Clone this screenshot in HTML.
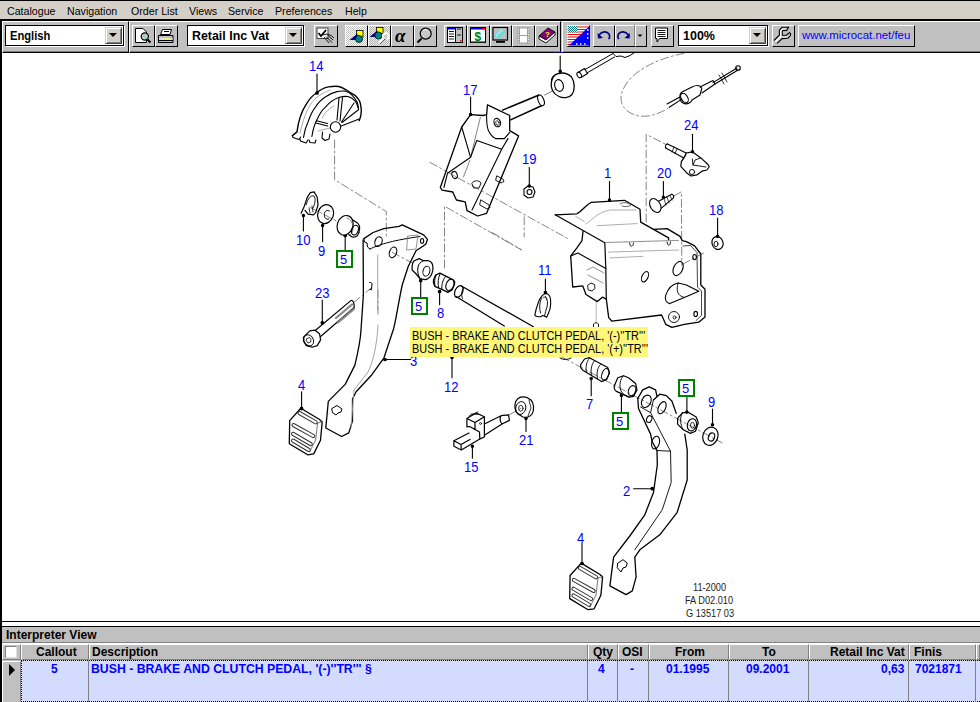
<!DOCTYPE html>
<html><head><meta charset="utf-8">
<style>
*{margin:0;padding:0;box-sizing:border-box}
html,body{width:980px;height:702px;overflow:hidden;background:#fff;font-family:"Liberation Sans",sans-serif}
div,span,svg,b{position:absolute}
#menu{left:0;top:0;width:980px;height:19px;background:#d4d0c8;border-top:1px solid #000}
#menu span{top:3.5px;font-size:11px;color:#000;white-space:nowrap;transform:scaleX(0.967);transform-origin:0 0}
#tb{left:0;top:19px;width:980px;height:34px;background:#c0c0c0;border-top:2px solid #000}
.sec{top:21px;height:32px;border-top:1px solid #fff;border-left:1px solid #fff;border-right:1px solid #000;border-bottom:1px solid #000;box-shadow:inset 0 -1px 0 #808080}
.btn{top:25px;height:22px;background:#c0c0c0;border-top:1px solid #fff;border-left:1px solid #fff;border-right:1px solid #000;border-bottom:1px solid #000;}
.combo{top:25px;height:21px;background:#fff;border:1px solid #000;box-shadow:1px 1px 0 #fff}
.combo b{left:4px;top:3px;font-size:12px;line-height:14px;font-weight:bold;color:#000;white-space:nowrap;transform-origin:0 0}
.dd{top:1px;right:1px;width:17px;height:17px;background:#d4d0c8;border-top:1px solid #d4d0c8;border-left:1px solid #d4d0c8;border-right:1px solid #404040;border-bottom:1px solid #404040;box-shadow:inset 1px 1px 0 #fff,inset -1px -1px 0 #808080}
.dd:after{content:"";position:absolute;left:3px;top:5px;border-left:4px solid transparent;border-right:4px solid transparent;border-top:4px solid #000}
#left{left:0;top:19px;width:2px;height:683px;background:#000}
.lb{font-size:14px;color:#0000ff;white-space:nowrap;line-height:13px;transform:scaleX(0.93);transform-origin:0 0}
.gb{border:2px solid #008000;width:17px;height:18px}
.gb span{left:2px;top:1px;font-size:13px;color:#0000ff;line-height:13px}
.cap{font-size:10px;color:#222;white-space:nowrap;line-height:10px;transform:scaleX(0.92);transform-origin:0 0}
#tip{left:410px;top:327px;width:238px;height:30px;background:#fff77a}
#tip span{left:2px;font-size:12px;transform:scaleX(0.912);transform-origin:0 0;color:#000;white-space:nowrap;line-height:13px}
#bp{left:2px;top:621px;width:978px;height:81px;background:#c0c0c0}
.hd{top:644px;height:16px;background:#c0c0c0;border-top:1px solid #fff;border-left:1px solid #fff;border-right:1px solid #808080;border-bottom:1px solid #808080}
.hd span{top:0px;font-size:12px;font-weight:bold;color:#000;white-space:nowrap;line-height:14px}
.vl{top:661px;width:1px;height:41px;background:#808080}
.dt{top:662px;font-size:12px;font-weight:bold;color:#0000ff;white-space:nowrap;line-height:14px}
</style></head><body>
<div id="menu">
<span style="left:6.5px">Catalogue</span>
<span style="left:66.5px">Navigation</span>
<span style="left:130.5px">Order List</span>
<span style="left:188.5px">Views</span>
<span style="left:228px">Service</span>
<span style="left:275px">Preferences</span>
<span style="left:345px">Help</span>
</div>
<div id="tb"></div>
<div class="sec" style="left:2px;width:127px"></div>
<div class="sec" style="left:129px;width:432px"></div>
<div class="sec" style="left:562px;width:418px;border-right:none"></div>
<div class="combo" style="left:5px;width:119px"><b style="left:4px;transform:scaleX(0.93)">English</b><div class="dd"></div></div>
<div class="btn" style="left:132px;width:23px"></div>
<div class="btn" style="left:155px;width:23px"></div>
<div class="combo" style="left:187px;width:117px"><b style="left:4px;transform:scaleX(1.033)">Retail Inc Vat</b><div class="dd"></div></div>
<div class="btn" style="left:314px;width:24px"></div>
<div class="btn" style="left:345px;width:23px;background:#e0e0e0"></div>
<div class="btn" style="left:368px;width:23px;background:#d0d0d0"></div>
<div class="btn" style="left:391px;width:23px"></div>
<div class="btn" style="left:414px;width:23px"></div>
<div class="btn" style="left:444px;width:23px"></div>
<div class="btn" style="left:467px;width:23px"></div>
<div class="btn" style="left:490px;width:22px"></div>
<div class="btn" style="left:512px;width:23px"></div>
<div class="btn" style="left:535px;width:23px"></div>
<div class="btn" style="left:567px;width:23px"></div>
<div class="btn" style="left:593px;width:22px"></div>
<div class="btn" style="left:615px;width:20px"></div>
<div class="btn" style="left:635px;width:12px"></div>
<div class="btn" style="left:651px;width:23px"></div>
<div class="combo" style="left:678px;width:90px"><b style="left:4px;transform:scaleX(1.04)">100%</b><div class="dd"></div></div>
<div class="btn" style="left:772px;width:23px"></div>
<div class="btn" style="left:798px;width:117px"><span style="left:3px;top:3px;font-size:11.4px;color:#0000ff;white-space:nowrap">www.microcat.net/feu</span></div>
<svg style="left:0;top:0" width="980" height="53" viewBox="0 0 980 53">
<defs>
<pattern id="dith1" width="2" height="2" patternUnits="userSpaceOnUse"><rect width="2" height="2" fill="#fff"/><rect width="1" height="1" fill="#c0c0c0"/><rect x="1" y="1" width="1" height="1" fill="#c0c0c0"/></pattern>
<pattern id="dith2" width="2" height="2" patternUnits="userSpaceOnUse"><rect width="2" height="2" fill="#e8e8e8"/><rect width="1" height="1" fill="#b8b8b8"/><rect x="1" y="1" width="1" height="1" fill="#b8b8b8"/></pattern>
<pattern id="tealck" width="2" height="2" patternUnits="userSpaceOnUse"><rect width="2" height="2" fill="#fff"/><rect width="1" height="1" fill="#008080"/><rect x="1" y="1" width="1" height="1" fill="#008080"/></pattern>
</defs>
<!-- preview page + magnifier -->
<path d="M135.5,28.5 H143 L146.5,32 V42.5 H135.5 Z" fill="#fff" stroke="#000" stroke-width="1"/>
<circle cx="144.8" cy="36.5" r="3.6" fill="#c8c8c8" stroke="#000" stroke-width="1.2"/>
<rect x="143" y="35" width="1.5" height="1.5" fill="#0ff"/><rect x="145" y="37.5" width="1.5" height="1.5" fill="#0ff"/>
<line x1="147.5" y1="39.5" x2="150.5" y2="42.5" stroke="#000" stroke-width="2"/>
<!-- printer -->
<path d="M162.5,29.5 H171.5 L170,34.5 H160.5 Z" fill="#fff" stroke="#000" stroke-width="1"/>
<line x1="164" y1="31.5" x2="169" y2="31.5" stroke="#000"/>
<path d="M158.5,35.5 H173 V42.5 H158.5 Z" fill="#c0c0c0" stroke="#000" stroke-width="1"/>
<rect x="159" y="38" width="13.5" height="2" fill="#e0e0e0"/>
<rect x="166" y="38.5" width="3" height="1" fill="#ff0"/>
<line x1="158.5" y1="40.5" x2="173" y2="40.5" stroke="#000"/>
<!-- check + hand -->
<rect x="317" y="28" width="11" height="10.5" fill="#fff" stroke="#404040" stroke-width="1"/>
<path d="M318.5,33 L321,36 L326,30" fill="none" stroke="#000" stroke-width="1.8"/>
<path d="M323,35 L327,34 L331,35.5 L334,38 M324,37 L329,43 M326,36.5 L332,42.5 M327.5,35 L333,40" fill="none" stroke="#000" stroke-width="0.9"/>
<!-- shapes 1 -->
<rect x="346" y="26" width="21" height="20" fill="url(#dith1)"/>
<rect x="356.5" y="30.5" width="6.5" height="6.5" fill="#ff0" stroke="#000" stroke-width="0.8"/>
<path d="M349.5,40 L357.5,33.5 V40 Z" fill="#000080"/>
<circle cx="359" cy="39" r="3.6" fill="#008080" stroke="#000" stroke-width="0.7"/>
<!-- shapes 2 -->
<rect x="369" y="26" width="21" height="20" fill="url(#dith2)"/>
<rect x="376.5" y="27.5" width="6.5" height="6" fill="#ff0" stroke="#000" stroke-width="0.8"/>
<path d="M369.5,37 L377.5,30.5 V37 Z" fill="#000080"/>
<circle cx="378.5" cy="35.5" r="3.6" fill="#008080" stroke="#000" stroke-width="0.7"/>
<path d="M379,43 L384,38 M383,37 A3,3 0 1 1 387,39" fill="none" stroke="#fff" stroke-width="1.8"/>
<path d="M380,44 L385,39" fill="none" stroke="#404040" stroke-width="0.8"/>
<!-- alpha -->
<text x="395" y="41.5" font-family="Liberation Serif" font-weight="bold" font-style="italic" font-size="19" fill="#000">α</text>
<!-- magnifier -->
<circle cx="425.7" cy="33.6" r="5.5" fill="#c8c8c8" stroke="#000" stroke-width="1.2"/>
<path d="M423,31 A3,3 0 0 1 427,30" stroke="#fff" fill="none" stroke-width="1"/>
<line x1="417.5" y1="42.5" x2="421.5" y2="38.5" stroke="#000" stroke-width="2"/>
<!-- parts list icon -->
<rect x="447.5" y="27.5" width="15" height="15" fill="#c0c0c0" stroke="#000" stroke-width="1"/>
<rect x="448" y="28" width="7" height="14" fill="#fff"/>
<rect x="448" y="28" width="7" height="1.5" fill="#00f"/>
<path d="M449,31.5 H454 M449,34 H454 M449,36.5 H454 M449,39 H454" stroke="#000" stroke-width="0.9"/>
<line x1="455.5" y1="28" x2="455.5" y2="42" stroke="#000"/>
<path d="M457,29 H461 M457,35 H461" stroke="#000" stroke-width="0.9"/>
<rect x="460" y="40" width="1.5" height="1.5" fill="#f00"/>
<!-- $ window -->
<rect x="470.5" y="27.5" width="15" height="15" fill="#fff" stroke="#000" stroke-width="1"/>
<rect x="471" y="28" width="14" height="1.5" fill="#00f"/><rect x="482" y="28" width="3" height="1.5" fill="#f00"/>
<rect x="471" y="41" width="14" height="1.2" fill="#808080"/>
<text x="474.5" y="40.5" font-family="Liberation Sans" font-weight="bold" font-size="12" fill="#008000">$</text>
<!-- monitor -->
<rect x="493" y="27.5" width="14.5" height="12.5" fill="#c0c0c0" stroke="#000" stroke-width="1.2"/>
<path d="M495,37 L501,30 M498,38 L505,31" stroke="#0ff" stroke-width="1.3"/>
<path d="M496,36 L502,29.5" stroke="#fff" stroke-width="1"/>
<rect x="496" y="41" width="9" height="1.8" fill="#000"/>
<!-- film -->
<rect x="517.5" y="27.5" width="12" height="16" fill="#a0a0a0"/>
<rect x="520" y="28.5" width="7" height="6.5" fill="#fff"/><rect x="520" y="36" width="7" height="6.5" fill="#fff"/>
<path d="M518.5,29 V43 M528.5,29 V43" stroke="#fff" stroke-width="1" stroke-dasharray="1 1.5"/>
<!-- book -->
<path d="M539,36 L548,28 L555,32 L546,40 Z" fill="#800080" stroke="#000" stroke-width="0.9"/>
<path d="M539,36 L539,39 L546,43 L555,35 L555,32 L546,40 Z" fill="#fff" stroke="#000" stroke-width="0.9"/>
<text x="545" y="37" font-family="Liberation Sans" font-weight="bold" font-size="8" fill="#ff0">?</text>
<!-- flag -->
<rect x="567.5" y="26" width="21.5" height="19.5" fill="#fff"/>
<path d="M567.5,27 H589 M567.5,29.5 H589 M567.5,32 H589 M567.5,34.5 H589 M567.5,37 H589 M567.5,39.5 H589 M567.5,42 H589 M567.5,44.5 H589" stroke="#f00" stroke-width="1.2"/>
<rect x="568" y="26" width="9" height="6.5" fill="url(#tealck)"/>
<path d="M589,26.5 L589,45.5 L569,45.5 Z" fill="#0000ff"/>
<path d="M587,30 h1.5 M587,34 h1.5 M587,38 h1.5 M584,44 h1.5 M580,44 h1.5 M576,44 h1.5" stroke="#fff" stroke-width="1.5"/>
<line x1="567.5" y1="46.5" x2="590" y2="46.5" stroke="#000"/><line x1="589.5" y1="26" x2="589.5" y2="46.5" stroke="#000"/>
<!-- undo / redo -->
<path d="M599,35 C602,31 607,31 609,34 C610,36 609.5,38 608.5,39" fill="none" stroke="#000080" stroke-width="1.6"/>
<path d="M597.5,33 L598,38.5 L603,38 Z" fill="#000080"/>
<path d="M628.5,35 C625.5,31 620.5,31 618.5,34 C617.5,36 618,38 619,39" fill="none" stroke="#000080" stroke-width="1.6"/>
<path d="M630,33 L629.5,38.5 L624.5,38 Z" fill="#000080"/>
<path d="M637.5,34.5 H642.5 L640,37 Z" fill="#000"/>
<line x1="634.5" y1="26" x2="634.5" y2="46" stroke="#808080"/>
<!-- comment -->
<path d="M655.5,28 H667.5 V38.5 H659.5 L657,42 V38.5 H655.5 Z" fill="#fff" stroke="#000" stroke-width="1"/>
<path d="M657.5,30.5 H665.5 M657.5,32.5 H665.5 M657.5,34.5 H665.5 M657.5,36.5 H665.5" stroke="#000" stroke-width="0.9"/>
<!-- wrench -->
<path d="M774,40.5 L779.5,35 L779.3,30.4 L781.9,27.3 L788.5,27.3 L786.7,30.4 L782.2,30.8 L782.2,35.2 L786.3,35.2 L790,32.3 L790.6,33 L790.4,35.6 L787.8,38.2 L782.2,38.6 L777,43.4 Z" fill="#d0d0d0" stroke="none"/>
<path d="M774,40.5 L779.5,35 L779.3,30.4 L781.9,27.3 L788.5,27.3 L786.7,30.4 L782.2,30.8 L782.2,35.2 L786.3,35.2 L790,32.3" fill="none" stroke="#000" stroke-width="1.1"/>
<path d="M790.6,33 L790.4,35.6 L787.8,38.2 L782.2,38.6 L777,43.4" fill="none" stroke="#000" stroke-width="1.1"/>
<path d="M775.5,41.5 L780.8,36.3 L780.8,31 L782.5,28.8" fill="none" stroke="#fff" stroke-width="1.2"/>
</svg>

<div id="left"></div>
<!-- drawing -->
<svg style="left:0;top:0" width="980" height="702" viewBox="0 0 980 702">
<g fill="none" stroke="#000" stroke-width="1.1" stroke-linejoin="round" stroke-linecap="round">
<g stroke="#777" stroke-width="0.9" stroke-dasharray="8 3 2 3">
<polyline points="334.6,140 334.6,179.7 386.3,211.5 386.3,239"/>
<polyline points="444.5,268 444.5,206.2 521.6,250"/>
<polyline points="524.2,216.8 524.2,236.7"/>
<line x1="430" y1="162.4" x2="569.3" y2="239.4"/>
<path d="M683.8,53.4 C660,58 630,70 622,92 C617,108 632,118 648,116 C655,115 662,112 668,108.4"/>
<polyline points="646.2,222 646.2,134.3 667.3,145.2"/>
<polyline points="674,196 681.4,191.8 681.8,265.2"/>
<line x1="703.6" y1="253.1" x2="680.6" y2="265.2"/>
<line x1="492" y1="232.4" x2="521" y2="249.4"/>
<line x1="310" y1="207.4" x2="362.3" y2="234.1"/>
<line x1="353.7" y1="302.5" x2="371.9" y2="287.5"/>
<line x1="544.5" y1="95" x2="558" y2="88.2"/>
<line x1="561.7" y1="357" x2="722.3" y2="442.9"/>
<line x1="509.4" y1="414.8" x2="521" y2="408.3"/>
<line x1="378" y1="290" x2="378" y2="314"/>
<line x1="392.2" y1="252.3" x2="423" y2="268.7"/>
</g>

<!-- part 1 main bracket -->
<line x1="609.5" y1="181.5" x2="609.5" y2="200"/>
<circle cx="609.5" cy="200" r="1.2" fill="#000"/>
<path stroke-width="1.3" d="M555.2,214.8 L576.9,213.8 C582,211 586,205 591.3,202.4 L624.4,200.3 L640,209.3 L640.7,222.1 L668.6,237.9 L668.6,240 M652.9,229.3 L667.1,228.6 L680,236.4 L682.2,240.6 L686.4,241.7 L694.6,245.8 L700.8,254 L700.8,285 L705,289.2 L705,317.1 L698.8,322.2 L684.3,324.3 L671.9,327.4 L665.7,324.3 L661.6,315 L612,321.2 L608.7,317.6 L606.3,299.2 L602.4,297.2 L597.3,301.6 L586,294.5 L582.8,285.9 L572.7,287 L570.7,256.1 L576.9,247.9 L582,240.6 L583,231.3"/>
<path stroke-width="1.2" d="M555.2,214.8 L604.8,242.7 L605.8,268.5 L606.3,299.2"/>
<path d="M570.7,256.1 L577.9,253 L605.8,268.5"/>
<path d="M605.7,242.5 L678.6,240.4" stroke="#888" stroke-width="1" stroke-dasharray="1.5 0.8"/>
<path d="M608.6,252.1 L678.6,250" stroke="#999" stroke-width="0.8"/>
<path d="M610,257.9 L642.9,256.4" stroke="#999" stroke-width="0.8"/>
<path d="M586,224 C592,220 598,212 610,210 L636,210" stroke="#999" stroke-width="0.8"/><path d="M575.7,216.4 L584.3,221.4" stroke="#999" stroke-width="0.8"/>
<path d="M597,225.7 L637,223.6" stroke="#999" stroke-width="0.8"/>
<path d="M620,204 C622,202 628,202 631,205 C629,207 624,207 622,206" stroke-width="0.8" stroke="#444"/>
<path d="M629.5,243 C630,247 633,248 633.5,243 M667,242 C667.5,246 670,247 670.5,242" stroke-width="0.9"/>
<path d="M683,246 L690.5,245.5 L697,252.5 L697.5,287 L701.5,291 L701.5,315.5 L696,320.5" stroke-width="0.9" stroke="#333"/>
<ellipse cx="645" cy="276.8" rx="3" ry="5.5" transform="rotate(25 645 276.8)"/>
<ellipse cx="678.1" cy="268.5" rx="4.5" ry="7.5" transform="rotate(25 678.1 268.5)"/>
<ellipse cx="694.6" cy="257.1" rx="1.8" ry="2.6"/>
<ellipse cx="695.7" cy="314" rx="1.8" ry="2.6"/>
<path d="M665.7,295.4 C668,288 673,284 678.1,283 L686.4,285 L698.8,291.2 L684.3,297.4 L669.8,303.6 C666,303 664.5,299 665.7,295.4 Z"/>
<path d="M678.1,283 C676,290 677,296 684.3,297.4" stroke-width="0.9"/>
<circle cx="674" cy="317" r="5.5" stroke-width="0.9"/>
<circle cx="674.5" cy="317.5" r="1.5" stroke-width="0.8"/>
<path d="M588,285 L591,283 L594.5,284.5 L595,288.5 L592,291 L588.5,290 Z" stroke-width="0.9"/>
<path d="M587,270 L593,267 L604,273 M588,275 L603,283" stroke="#777" stroke-width="0.8"/>
<!-- part 24 switch -->
<line x1="692.5" y1="134.2" x2="692.5" y2="151.8"/>
<circle cx="692.5" cy="151.8" r="1.2" fill="#000"/>
<path d="M667.4,143.9 L686.2,153 M666.2,148.2 L683.8,157.9"/>
<path d="M667.4,143.9 C665,144.5 665,147.5 666.2,148.2"/>
<path d="M674,147 L672,152 M677,149 L675,153.5" stroke-width="0.8"/>
<path stroke-width="1.2" d="M686.2,153 L692.3,151.8 L700.8,157.9 L708,164.5 L709.2,167 L706.8,170 L702,171.2 L697.1,174.8 L691,176 L687.4,173.6 L680.8,166.4 L681.4,161.5 L683.8,157.9 Z"/>
<path d="M686,155 L681.4,161.5 M692.3,159 L693,165 L706,167 M700.8,157.9 L695,160 L693,165" stroke-width="0.9"/>
<circle cx="692" cy="172" r="2.6" stroke-width="0.9"/>
<!-- part 20 bolt -->
<line x1="663.4" y1="181.5" x2="663.4" y2="197.3"/>
<circle cx="663.4" cy="197.3" r="1.2" fill="#000"/>
<ellipse cx="655.3" cy="205.5" rx="5" ry="7.5" transform="rotate(-30 655.3 205.5)"/>
<path d="M659,200.9 L671.7,194.2 M661.4,208.2 L673.5,197.9 M671.7,194.2 C673.5,194.5 674,196.5 673.5,197.9"/>
<path d="M664,198.5 L666,205 M667,197 L669,203 M670,195.5 L672,200" stroke-width="0.7"/>
<!-- part 18 nut -->
<line x1="717.6" y1="218" x2="717.6" y2="236.2"/>
<circle cx="717.6" cy="236.2" r="1.2" fill="#000"/>
<ellipse cx="717.5" cy="243" rx="5.5" ry="6.5" transform="rotate(-20 717.5 243)" stroke-width="1.2"/>
<ellipse cx="716" cy="244" rx="2" ry="2.8" stroke-width="0.9"/>
<!-- pin below bracket 1 -->
<line x1="596.2" y1="303" x2="596.2" y2="323" stroke="#999" stroke-width="0.8" stroke-dasharray="1 1"/>
<path d="M593.5,327 L593.5,324 C594,322.5 598,322.5 598.5,324 L598.5,327" stroke-width="0.9"/>

<!-- part 14 wheel -->
<line x1="317" y1="74" x2="317" y2="93"/>
<circle cx="317" cy="93" r="1.3" fill="#000"/>
<path stroke-width="1.4" d="M292.4,135.6 L297,131.9 C298,124 301,112 306.3,104.1 C310,98 313,95 316.5,93 C321,89 325,87.5 328.5,86.9 C332,86.3 336,86 338.7,86.5 C341,87 343,88 345.2,89.3 C349,92 352,93.5 355.4,95.7 C358,98 360,101 360.5,104.1 C361.5,108 361.5,112 360.9,115.2 C360.5,117.5 360,119 359.1,120.7"/>
<path d="M303.5,137.4 C304.5,131 306,126 308.1,121.7 C310.5,115 313,110 315.6,106.9 C318.5,102 322,99 325.7,96.7 C329.5,94 333,92.5 336.9,91.6 C339.5,91 342.5,90.8 345.2,91.1 C348,92 350,93 351.7,94.8 C354,97 356,99.5 357.2,102.2 C358,104.5 358.5,107 358.6,109.6"/>
<path d="M311.9,136.5 C313,129 315,123 317.4,118.9 C319.5,114 322,110 325.7,106.9 C329,103 333.5,99.5 338.7,97.6 C342,96.5 346,96.2 348.9,96.7 C351.5,97.5 353.5,99 355.4,101.3 C356.8,103 357.6,105.5 358.1,107.8"/>
<path d="M300,133 C302,125 304,116 309,107 C313,99 320,94 330,90" stroke="#888" stroke-width="0.7"/>
<line x1="340.6" y1="126.3" x2="359.1" y2="118.9"/>
<line x1="342" y1="122.5" x2="358.1" y2="110"/>
<line x1="337" y1="120" x2="339" y2="98"/>
<line x1="340" y1="121" x2="342.5" y2="97.5"/>
<line x1="341.5" y1="122" x2="354" y2="103"/>
<line x1="327.6" y1="123.5" x2="316.5" y2="120.7"/>
<line x1="327.6" y1="126" x2="316" y2="123"/>
<line x1="318" y1="131" x2="330" y2="128" stroke="#888" stroke-width="0.7"/>
<path d="M322,118 C325,112 330,108 334,106" stroke="#888" stroke-width="0.7"/>
<circle cx="335.5" cy="127" r="5.2" fill="#fff"/>
<path d="M292.4,135.6 L293,137.5 L299,139.5 L300.7,137"/>
<path d="M299.8,138.6 L300.5,141 L306,143 L308,140"/>
<path d="M309,140 L310,142.5 L315,143 L316,140"/>
<path d="M322.5,132 L322,138 L325,140.5 L329,139 L330,134"/>

<!-- part 17 bracket -->
<line x1="470.6" y1="97" x2="470.6" y2="114.6"/>
<circle cx="470.6" cy="114.6" r="1.2" fill="#000"/>
<path stroke-width="1.5" d="M502.6,110.1 L539,95 M510.6,119.9 L542,105.5"/>
<ellipse cx="541" cy="100.3" rx="2.8" ry="5.5" transform="rotate(-22 541 100.3)" fill="#fff"/>
<path stroke-width="1.3" d="M470.6,114.6 L461.7,127 L440.3,187.5 L442.1,190.2 L452.8,192 L456.4,200 L465.2,201.8 L467,210.7 L477.7,216 L486.6,213.3 L518.6,135.9 L509.7,130.6 L509.7,115.5 L487.5,104.8 L486.6,114.6 L483,115.5 Z"/>
<path d="M486.6,114.6 C486.5,122 487,127 488.4,130.6 C490,134 492,137 495.5,138.6 L504.4,138.6 L509.7,132.4"/>
<ellipse cx="497.3" cy="122.6" rx="3.2" ry="4.3" transform="rotate(-20 497.3 122.6)"/>
<ellipse cx="497.5" cy="123" rx="1.6" ry="2.4" transform="rotate(-20 497.5 123)" stroke-width="0.7"/>
<path d="M461.7,127 L470.6,157.3 L447.5,173.3 L443.9,187.5"/>
<path d="M480.4,117.2 L470.6,157.3" stroke="#666" stroke-width="0.8"/>
<path d="M470.6,157.3 L476.8,140.4 L501.7,149.3"/>
<path d="M507.9,138.6 L501.7,149.3 L472,210"/>
<path d="M463.5,176.9 L470,160" stroke="#666" stroke-width="0.8"/>
<ellipse cx="454.6" cy="175" rx="2.6" ry="3.6" transform="rotate(-20 454.6 175)"/>
<path d="M472,183 C474,180 479,180 481,183 L479,188 L474,188 Z" stroke-width="0.9"/>
<path d="M497,176 L503,179 L504,181.5 L501,183 L496,180.5 Z" stroke-width="0.9"/>
<path d="M481,200 L489,205 L490,207.5 L487,209 L480,205 Z" stroke-width="0.9"/>
<!-- nut 19 -->
<line x1="529.3" y1="167.5" x2="529.3" y2="186"/>
<circle cx="529.3" cy="186" r="1.2" fill="#000"/>
<path d="M524,189 L528,186 L533,187 L535,192 L533,197 L528,198 L524,195 Z"/>
<circle cx="529.5" cy="192" r="2.5"/>

<!-- clip 10 -->
<line x1="303.4" y1="215.6" x2="303.4" y2="231"/>
<circle cx="303.4" cy="215.6" r="1.2" fill="#000"/>
<path stroke-width="1.2" d="M301.1,213.3 L304.2,206.4 L307.3,197.3 L310.3,192.7 L314.1,191.9 L317.2,197.3 L318,204.9 L315.7,212.6 L313.4,214.9 L308,214.1 L305,210.3"/>
<path d="M306,205 C308,198 311,195 314,196 C316,199 315,204 313,208" stroke-width="0.9"/>
<path d="M309,208 L310,213 M312,206 L313,212" stroke-width="0.8"/>
<!-- washer 9 -->
<line x1="322.6" y1="225.6" x2="322.6" y2="241.7"/>
<circle cx="322.6" cy="225.6" r="1.2" fill="#000"/>
<ellipse cx="325.6" cy="214.1" rx="7.8" ry="9.6" transform="rotate(20 325.6 214.1)" stroke-width="1.2"/>
<path d="M329.5,211 C327,209.5 324.5,211 324.3,214.5 C324.2,218 326.5,220 329,219" stroke-width="1"/>
<!-- bush 5 left -->
<line x1="345.2" y1="235.5" x2="345.2" y2="250"/>
<circle cx="345.2" cy="235.5" r="1.3" fill="#000"/>
<path stroke-width="1.2" fill="#fff" d="M346.5,216.5 L350.5,218.5 L357.9,223.3 C359.5,225 360,227 359.6,229 C359.2,232 358.5,234.5 357.4,235.8 C355.5,237.2 353.5,237.3 352.2,237 L348.8,234.7"/>
<ellipse cx="345.1" cy="225.3" rx="7.8" ry="10" transform="rotate(20 345.1 225.3)" stroke-width="1.2" fill="#fff"/>
<path d="M347,218 C351,219 353.5,224 353,229.5 C352.5,232.5 351,234.5 349.5,235" stroke-width="0.8" stroke="#555"/>
<ellipse cx="355" cy="230.1" rx="3.2" ry="5" transform="rotate(20 355 230.1)"/>
<!-- pedal 3 -->
<path stroke-width="1.3" d="M363.9,238.6 L373.1,232.5 L383.8,228.6 L399.1,226.3 L402.2,224.8 L423.6,234.8 L427.5,239.4 L425.9,244 L422.9,246.3 L416,250.8 L408.3,266.2 L402.2,285 C398,305 396,320 393.6,328.7 L384,357.8 L371.9,374.7 L356.1,391.7 L352.5,399 L352.5,420.8 L348.8,432.9 L341.6,436.5 L325.8,428 L328.3,401.4 L345.2,384.4 L354.9,365.1 C358,352 360.5,340 361,330 L363.4,294.8 L363.1,240"/>
<path d="M363.9,238.6 L364.5,242 L367,243 L367.5,247 L370,249" stroke-width="1"/>
<path d="M370,249 C380,244 395,240 420,236.5" stroke-width="1"/>
<path d="M377.7,255 L377.7,310" stroke="#999" stroke-width="0.9"/>
<path d="M378,325 C377,345 373,362 368,372 L354,390 L351,428" stroke="#999" stroke-width="0.9"/>
<ellipse cx="378.5" cy="241.7" rx="3.5" ry="5" transform="rotate(20 378.5 241.7)"/>
<ellipse cx="393" cy="252.4" rx="3.5" ry="5.5" transform="rotate(20 393 252.4)"/>
<ellipse cx="422.1" cy="240.9" rx="1.6" ry="2.4"/>
<path d="M408,236 L418,235 L416,249 L407,250 Z" stroke="#777" stroke-width="0.8"/>
<path d="M332,408.5 L337,405.5 L342,409 L341,412 L338,413 L336,415 L333,413 Z" stroke-width="1"/>
<line x1="385" y1="359.5" x2="410.6" y2="359.5"/>
<circle cx="385" cy="359.5" r="1.3" fill="#000"/>
<!-- bush 5 right of pedal3 -->
<line x1="420.7" y1="280.6" x2="420.7" y2="297"/>
<circle cx="420.7" cy="280.6" r="1.3" fill="#000"/>
<path stroke-width="1.2" fill="#fff" d="M412.1,266.4 C412.5,263 413,261.5 414.3,260.7 L419.2,258.6 L423.5,260.7 L428.5,260.7 C431,261.5 432,262.5 432.4,264.3 C433.2,266.5 433.2,268.5 432.8,270.7 C432,274 431,276 429.9,277.1 C428,279 426.5,279.6 424.9,279.6 L420,278.5 L415.7,273.5 L412.1,270 Z"/>
<path d="M423.5,260.7 C420.5,262 418.5,264 418,267 C417.2,271 418,275.5 420,278.5" stroke-width="1"/>
<ellipse cx="426.4" cy="271.2" rx="3.4" ry="5" transform="rotate(15 426.4 271.2)" stroke-width="1"/>
<!-- bolt 23 -->
<line x1="322.3" y1="300" x2="322.3" y2="322.8"/>
<circle cx="322.3" cy="322.8" r="1.3" fill="#000"/>
<path stroke-width="1.2" d="M315.5,330.2 L350.8,300.6 C352.5,300 354.5,302 354.2,307.5 L320.6,336.5"/>
<path d="M336,318 L352,304.5 M338,322.5 L354,309" stroke="#888" stroke-width="2.2" stroke-dasharray="0.8 0.8"/>
<path stroke-width="1.2" fill="#fff" d="M303.5,337.1 L309.8,330.8 L314.9,330.2 L319.5,333.7 L320.6,339.9 L317.2,345.6 L312.1,347.3 L306.4,345.6 L303.5,341.1 Z"/>
<ellipse cx="308.7" cy="340.3" rx="4.6" ry="5.8" transform="rotate(-30 308.7 340.3)" stroke-width="0.9"/>
<path d="M307,338.5 L309.5,337.5 L311,339.5 L310.5,342 L308,343 L306.5,341 Z" stroke-width="0.8"/>
<path d="M369.6,282.4 C371.5,282 372.5,283.5 371.9,285 L371.5,289.8 L369.8,289.5" stroke-width="1"/>
<!-- pad 4 left -->
<line x1="301.6" y1="391.7" x2="301.6" y2="408.6"/>
<circle cx="301.6" cy="408.6" r="1.3" fill="#000"/>
<path stroke-width="1.3" d="M300.8,408.2 L289.7,420.6 L289.3,443.7 L307.7,454.8 L313.7,453.9 L320.5,440.3 L322.2,421.9 L319.2,419.3 Z"/>
<path d="M322.2,422 L317.6,423 L315.6,440 L309.6,452" stroke-width="0.8" stroke="#555"/>
<g stroke-linecap="round"><path d="M299.6,413.1 L315.6,422.3 M293.6,425.1 L313.2,436 M293.1,433.9 L310.7,444.1 M293.1,440.6 L308.6,449.9" stroke="#333" stroke-width="4.2"/>
<path d="M299.6,413.1 L315.6,422.3 M293.6,425.1 L313.2,436 M293.1,433.9 L310.7,444.1 M293.1,440.6 L308.6,449.9" stroke="#fff" stroke-width="2.2"/></g>

<!-- bush 8 -->
<line x1="439.6" y1="291.5" x2="439.6" y2="304.8"/>
<circle cx="439.6" cy="291.5" r="1.3" fill="#000"/>
<path stroke-width="1.3" d="M433.5,280 L435.6,275 L439.9,273.2 L446.3,276.4 L453.5,280 C454.5,281 454.8,282.5 454.5,284.2 L452,289.9 L447.8,292.4 L442.8,289.9 L434.9,286.4 L433.5,282.8 Z"/>
<path d="M436.4,275 C434.5,278 434.3,282 434.9,285.6 M439.9,274.2 C438,278 437.8,283 438.5,287.8 M445.6,276.4 C442.5,280 441.5,285 441.8,289.5" stroke-width="1"/>
<ellipse cx="449.9" cy="284.9" rx="3.8" ry="6" transform="rotate(20 449.9 284.9)"/>
<!-- shaft 12 -->
<path stroke-width="1.3" d="M461.8,286.2 L533.4,326.7 M456.5,296.8 L504.3,326"/>
<ellipse cx="458.8" cy="291.5" rx="3.8" ry="6.2" transform="rotate(25 458.8 291.5)" stroke-width="1.2"/>
<path d="M464,287.5 C461.5,290 461,295 462.5,298.5" stroke-width="0.9"/>
<line x1="452" y1="357.5" x2="452" y2="377.8"/>
<circle cx="452" cy="357.5" r="1.2" fill="#000"/>
<path d="M560,358 C563,360 568,360 571,358" stroke-width="1"/>
<!-- clip 11 -->
<line x1="545.4" y1="279" x2="545.4" y2="292.5"/>
<circle cx="545.4" cy="292.5" r="1.3" fill="#000"/>
<path stroke-width="1.1" d="M534.8,315.4 C535.5,311 537,306 538.5,302 C540,298 542.5,294.5 545.4,293.5 C548,293.5 550,296 550.5,299 C551,304 550.5,309 548.5,313 L546.7,317.4 C545.5,316.5 544,316 542.7,315.4 C541.5,316.5 540,317 538.8,316.7 C537,316.5 535.5,316.3 534.8,315.4 Z"/>
<path d="M541.5,298 C539.5,302 539,308 540.5,313 M545.5,296.5 C547.5,299 548,303 547,307 C546,310.5 545,313 544.5,316" stroke-width="0.9"/>
<path d="M543,297.5 C544.5,296.5 546.5,297 546.5,299.5" stroke-width="0.8"/>
<!-- part 15 -->
<line x1="472.4" y1="446.3" x2="472.4" y2="458.3"/>
<circle cx="472.4" cy="446.3" r="1.2" fill="#000"/>
<path stroke-width="1.2" d="M453.9,440.7 L469,433 M453.9,440.7 L453.9,446.3 L461.3,450 L479.8,438.9 M453.9,440.7 L461,444.5 L461.3,450 M461,444.5 L470,439.5"/>
<path stroke-width="1.2" d="M466.9,418.5 L476.1,413 L484.4,416.7 L484.4,437 L479.8,438.9 L479.5,432 L469.6,426.5 L466.9,426.9 Z M466.9,418.5 L475,422.5 L484.4,416.7 M475,422.5 L475,429"/>
<path d="M469,416 L478,412 M471,414 L480,414.5" stroke-width="0.8"/>
<circle cx="480.5" cy="423.5" r="1" stroke-width="0.7"/>
<path stroke-width="1.2" d="M484.4,424 L501.1,415.7 L508.5,414.8 L509.4,420.4 L502,424 L484.4,435.2 M501.1,415.7 C499.5,418 500,422 502,424"/>
<!-- nut 21 -->
<line x1="526" y1="418.5" x2="526" y2="431.5"/>
<circle cx="526" cy="418.5" r="1.2" fill="#000"/>
<path stroke-width="1.2" d="M516,401 C518,397 523,396 527,397.5 L531,400 C534,403 534.5,410 532,414 C530,417 526,418 523,417 L518,414 C514.5,411 514,405 516,401 Z"/>
<ellipse cx="520.8" cy="408" rx="5" ry="6.5" transform="rotate(15 520.8 408)" stroke-width="0.9"/>
<ellipse cx="520.8" cy="408.3" rx="2.2" ry="3" stroke-width="0.8"/>
<path d="M529,400 L531,408 L528,416" stroke-width="0.8"/>
<!-- bush 7 -->
<line x1="591.2" y1="378" x2="591.2" y2="395.7"/>
<circle cx="591.2" cy="378.5" r="1.2" fill="#000"/>
<path stroke-width="1.2" d="M580.8,364.5 L584.5,359 L589.4,357.7 L607.7,367.5 L609.5,373 L606.5,379.8 L601.6,381.6 L583.2,370.6 C581,369 580.3,366.5 580.8,364.5 Z"/>
<path d="M589.4,358.5 C586,362 585.5,368 586.5,372.5 M594.3,361 C591,365 590.5,371 591.5,375.5 M600.4,364.5 C597,368 596.5,374 597.5,378.5" stroke-width="0.9"/>
<ellipse cx="605.3" cy="374.3" rx="3.3" ry="6" transform="rotate(20 605.3 374.3)"/>
<!-- bush 5 middle -->
<line x1="621.4" y1="395" x2="621.4" y2="412.5"/>
<circle cx="621.4" cy="395.5" r="1.2" fill="#000"/>
<path stroke-width="1.2" d="M614.3,385.7 L617.8,377.8 L623.5,375.7 L628.5,377.8 L635.6,383.5 L637,389.9 L633.5,396.4 L629.2,397.1 L616.4,391.4 C614.5,390 614,387.5 614.3,385.7 Z"/>
<path d="M623.5,375.7 C620,379 619,386 621,391 C623,394.5 626,396.5 629.2,397.1" stroke-width="0.9"/>
<ellipse cx="632" cy="390.7" rx="3.5" ry="5.2" transform="rotate(20 632 390.7)"/>
<!-- pedal 2 -->
<path stroke-width="1.3" d="M637.8,398.5 L642.7,389.9 L649.2,386.8 L655.6,389.9 L657,396.4 M653.4,399.9 L659.8,394.2 L666.3,395.6 L672,401.3 L676.2,413.4"/>
<path stroke-width="1.3" d="M637.8,398.5 L638.5,408.5 L650.6,434.1 L652,441.2 L657,450.5 L657.3,465 L653.5,492.4 L644.8,514.8 L629.8,536 L613.6,557.2 L609.9,585.9 L626.1,594.6 L632.3,590.9 L636.1,577.2 L634.8,557.2 L639.8,549.8 L659.8,534.8 L677.2,512.3 L687.2,480 L687.2,450 L684.8,434.1"/>
<path d="M640.6,407 L650.6,412.7 L653.4,399.9 M650.6,412.7 L670.5,451.2 L671.2,482.4 L662.2,509.9 L634.8,549.8 M657,450.5 L670.5,451.2" stroke-width="0.9"/>
<ellipse cx="646.3" cy="401.3" rx="4.5" ry="6.5" transform="rotate(25 646.3 401.3)"/>
<ellipse cx="662" cy="407.7" rx="3.5" ry="6.5" transform="rotate(25 662 407.7)"/>
<ellipse cx="649.2" cy="419.1" rx="2.5" ry="3.5" transform="rotate(25 649.2 419.1)"/>
<ellipse cx="655.6" cy="442.6" rx="3.8" ry="6.5" transform="rotate(15 655.6 442.6)"/>
<path d="M618,563 L623,559.7 L627.3,563 L626,567 L623,568 L621,572 L617.5,568 Z" stroke-width="1"/>
<line x1="633.6" y1="488.7" x2="652.3" y2="488.7"/>
<circle cx="652.3" cy="488.7" r="1.3" fill="#000"/>
<!-- bush 5 right -->
<line x1="686.9" y1="397.5" x2="686.9" y2="412"/>
<circle cx="686.9" cy="412" r="1.2" fill="#000"/>
<path stroke-width="1.2" d="M677.6,418.4 L682.6,412.7 L689,412.7 L696.2,417 L698.3,422.7 L695.5,431.3 L690.5,433.4 L683.3,429.8 L677.6,424.1 Z"/>
<path d="M682.6,412.7 C680,416 679.5,424 683.3,429.8" stroke-width="0.9"/>
<ellipse cx="691.9" cy="424.8" rx="4.5" ry="6.2" transform="rotate(15 691.9 424.8)"/>
<ellipse cx="692.5" cy="425.3" rx="2" ry="3" stroke-width="0.8"/>
<!-- washer 9 right -->
<line x1="712.5" y1="409" x2="712.5" y2="424.8"/>
<circle cx="712.5" cy="424.8" r="1.2" fill="#000"/>
<ellipse cx="710.4" cy="436.2" rx="7.5" ry="9.3" transform="rotate(20 710.4 436.2)" stroke-width="1.2"/>
<ellipse cx="711.5" cy="437" rx="3" ry="4.2" transform="rotate(20 711.5 437)"/>
<!-- pad 4 right -->
<line x1="582" y1="543.5" x2="582" y2="563.5"/>
<circle cx="582" cy="563.5" r="1.3" fill="#000"/>
<path stroke-width="1.3" d="M581.2,563.1 L570.1,575.5 L569.7,598.6 L588.1,609.7 L594.1,608.8 L600.9,595.2 L602.6,576.8 L599.6,574.2 Z"/>
<path d="M602.6,577 L598,578 L596,595 L590,607" stroke-width="0.8" stroke="#555"/>
<g stroke-linecap="round"><path d="M580,568 L596,577.2 M574,580 L593.6,590.9 M573.5,588.8 L591.1,599 M573.5,595.5 L589,604.8" stroke="#333" stroke-width="4.2"/>
<path d="M580,568 L596,577.2 M574,580 L593.6,590.9 M573.5,588.8 L591.1,599 M573.5,595.5 L589,604.8" stroke="#fff" stroke-width="2.2"/></g>

<!-- top bushing & rods -->
<line x1="560.2" y1="56" x2="560.2" y2="71.3"/>
<circle cx="560.2" cy="71.3" r="1.2" fill="#000"/>
<path stroke-width="1.3" d="M557,74 C562,72 568,73 571.5,77 C575,82 575,90 572,94.5 C569,98 563,98.5 559,96.5 C553,94 550,88 551.5,81.5 C552.5,77.5 554.5,75 557,74 Z"/>
<path d="M557,74 C553.5,75 551,78 551.5,81.5" />
<ellipse cx="559" cy="85.5" rx="4.3" ry="6" transform="rotate(-15 559 85.5)"/>
<path d="M585,69.5 L613,53.5 M587,73 L614.5,57" stroke-width="1"/>
<path d="M578,72.5 L584.5,68.5 L587.5,73.5 L581,77.5" stroke-width="1.1"/>
<ellipse cx="579.2" cy="75" rx="2" ry="3" transform="rotate(-30 579.2 75)" stroke-width="1"/>
<path d="M613,53.5 L616,56.5 L621,56 L625,57.5 L630,55.5 L634,53" stroke-width="1"/>
<line x1="555" y1="52.5" x2="556" y2="52.5" stroke="#00f" stroke-width="1"/>
<line x1="559.5" y1="52.5" x2="563.5" y2="52.5" stroke="#00f" stroke-width="1"/>
<path d="M669.2,107.3 L681.6,99.4 M667,104 L680,97"/>
<path d="M682,92 C679,94 679,101 683,103 C687,105 691,103 692,100 L700,95 L701.8,88.2 C700,85 696,85 692,87 Z"/>
<ellipse cx="684.5" cy="98" rx="3.2" ry="5.2" transform="rotate(-30 684.5 98)"/>
<path d="M700,87 L713,80.5 L715,84 L702,93"/>
<path d="M713,82.6 L737,68 M715,84 L738,70"/>
<path d="M719,75 L724,84 M722,73 L727,82" stroke-width="0.8"/>
<circle cx="738" cy="68" r="2.3"/>

</g>
</svg>
<!-- labels -->
<span class="lb" style="left:309px;top:60px">14</span>
<span class="lb" style="left:463px;top:84px">17</span>
<span class="lb" style="left:522px;top:153px">19</span>
<span class="lb" style="left:684px;top:119px">24</span>
<span class="lb" style="left:604px;top:167px">1</span>
<span class="lb" style="left:657px;top:167px">20</span>
<span class="lb" style="left:709px;top:204px">18</span>
<span class="lb" style="left:296px;top:234px">10</span>
<span class="lb" style="left:318px;top:245px">9</span>
<span class="lb" style="left:538px;top:264px">11</span>
<span class="lb" style="left:315px;top:287px">23</span>
<span class="lb" style="left:437px;top:307px">8</span>
<span class="lb" style="left:410px;top:355px">3</span>
<span class="lb" style="left:444px;top:381px">12</span>
<span class="lb" style="left:298px;top:379px">4</span>
<span class="lb" style="left:586px;top:398px">7</span>
<span class="lb" style="left:708px;top:396px">9</span>
<span class="lb" style="left:519px;top:434px">21</span>
<span class="lb" style="left:464px;top:461px">15</span>
<span class="lb" style="left:623px;top:485px">2</span>
<span class="lb" style="left:577px;top:532px">4</span>
<div class="gb" style="left:336px;top:250px"><span>5</span></div>
<div class="gb" style="left:411px;top:297px"><span>5</span></div>
<div class="gb" style="left:612px;top:412px"><span>5</span></div>
<div class="gb" style="left:678px;top:379px"><span>5</span></div>
<span class="cap" style="left:693px;top:582.5px">11-2000</span>
<span class="cap" style="left:685px;top:595.5px">FA D02.010</span>
<span class="cap" style="left:685.5px;top:608.5px">G 13517 03</span>
<div id="tip"><span style="top:3px">BUSH - BRAKE AND CLUTCH PEDAL, '(-)''TR'''</span><span style="top:16px">BUSH - BRAKE AND CLUTCH PEDAL, '(+)''TR'''</span></div>
<!-- bottom panel -->
<div style="left:2px;top:621px;width:978px;height:1px;background:#000"></div>
<div style="left:2px;top:622px;width:978px;height:4px;background:#fff"></div>
<div style="left:2px;top:626px;width:978px;height:1px;background:#000"></div>
<div style="left:2px;top:627px;width:978px;height:75px;background:#c0c0c0"></div>
<span style="left:6px;top:628px;font-size:12px;font-weight:bold;white-space:nowrap;line-height:14px">Interpreter View</span>
<div style="left:2px;top:642px;width:978px;height:1px;background:#808080"></div>
<div style="left:2px;top:643px;width:978px;height:1px;background:#fff"></div>
<div class="hd" style="left:2px;width:19px"></div>
<div style="left:5px;top:646px;width:12px;height:12px;background:#fff;border-top:1px solid #808080;border-left:1px solid #808080;border-right:1px solid #dfdfdf;border-bottom:1px solid #dfdfdf"></div>
<div class="hd" style="left:21px;width:68px"><span style="left:14px">Callout</span></div>
<div class="hd" style="left:89px;width:499px"><span style="left:2px">Description</span></div>
<div class="hd" style="left:588px;width:30px"><span style="left:4px">Qty</span></div>
<div class="hd" style="left:618px;width:31px"><span style="left:3px">OSI</span></div>
<div class="hd" style="left:649px;width:80px"><span style="left:25px">From</span></div>
<div class="hd" style="left:729px;width:80px"><span style="left:32px">To</span></div>
<div class="hd" style="left:809px;width:100px"><span style="left:20px">Retail Inc Vat</span></div>
<div class="hd" style="left:909px;width:67px"><span style="left:4px">Finis</span></div>
<div class="hd" style="left:976px;width:4px"></div>
<div style="left:2px;top:661px;width:19px;height:41px;background:#c0c0c0;border-top:1px solid #fff;border-left:1px solid #fff;border-right:1px solid #808080"></div>
<div style="left:9px;top:664px;width:0;height:0;border-top:6px solid transparent;border-bottom:6px solid transparent;border-left:6px solid #000"></div>
<div style="left:21px;top:661px;width:959px;height:41px;background:#d3dcfe"></div>
<div style="left:21px;top:660px;width:959px;height:42px;border-top:1px dotted #000;border-left:1px dotted #000;border-bottom:1px dotted #000"></div>
<div class="vl" style="left:88px"></div>
<div class="vl" style="left:587px"></div>
<div class="vl" style="left:617px"></div>
<div class="vl" style="left:648px"></div>
<div class="vl" style="left:728px"></div>
<div class="vl" style="left:808px"></div>
<div class="vl" style="left:908px"></div>
<div class="vl" style="left:975px"></div>
<span class="dt" style="left:51px">5</span>
<span class="dt" style="left:91px;transform:scaleX(1.022);transform-origin:0 0">BUSH - BRAKE AND CLUTCH PEDAL, '(-)''TR''' §</span>
<span class="dt" style="left:598px">4</span>
<span class="dt" style="left:630px">-</span>
<span class="dt" style="left:666px">01.1995</span>
<span class="dt" style="left:746px">09.2001</span>
<span class="dt" style="left:881px">0,63</span>
<span class="dt" style="left:915px">7021871</span>
</body></html>
